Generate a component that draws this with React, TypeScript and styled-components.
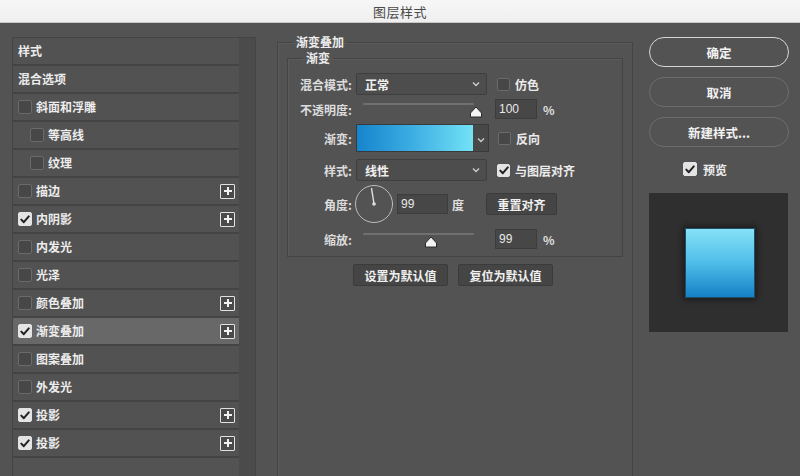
import React from "react";
import styled, { createGlobalStyle } from "styled-components";

const Global = createGlobalStyle`
  html, body { margin: 0; padding: 0; background: #535353; }
  body { font-family: "Noto Sans CJK SC", "Noto Sans", sans-serif; font-size: 12px; color: #e6e6e6; }
  * { box-sizing: border-box; }
`;

const W = 700;

const Window = styled.div`
  width: 800px;
  height: 476px;
  overflow: hidden;
  background: #535353;
  display: flex;
  flex-direction: column;
`;

const TitleBar = styled.div`
  height: 23px;
  flex: 0 0 23px;
  background: linear-gradient(#f7f7f7, #efefef);
  border-bottom: 1px solid #c8c8c8;
  display: flex;
  align-items: center;
  justify-content: center;
  color: #4a4a4a;
  font-size: 13px;
  letter-spacing: 0.5px;
`;

const Body = styled.div`
  flex: 1;
  display: flex;
  align-items: flex-start;
  padding: 12px 0 0 12px;
`;

/* ---------- left list ---------- */
const StyleList = styled.div`
  width: 244px;
  height: 460px;
  margin-top: 2px;
  display: flex;
  border-left: 1px solid #444444;
  border-top: 1px solid #444444;
`;

const Rows = styled.div`
  width: 226px;
  display: flex;
  flex-direction: column;
`;

const Gutter = styled.div`
  flex: 1;
  background: #4b4b4b;
  border-right: 1px solid #454545;
`;

const Row = styled.div<{ $selected?: boolean; $indent?: number }>`
  height: 28px;
  flex: 0 0 28px;
  display: flex;
  align-items: center;
  padding-left: ${(p) => 5 + (p.$indent ?? 0)}px;
  padding-right: 4px;
  gap: 4px;
  background: ${(p) => (p.$selected ? "#686868" : "#525252")};
  border-bottom: 2px solid #444444;
  font-weight: ${W};
  color: #ececec;
  font-size: 12px;
`;

const RowLabel = styled.span`
  flex: 1;
  line-height: 14px;
`;

const PlusBox = styled.span`
  width: 15px;
  height: 15px;
  border: 1.5px solid #e2e2e2;
  border-radius: 1px;
  position: relative;
  background: #4a4a4a;
  &::before, &::after {
    content: "";
    position: absolute;
    background: #f2f2f2;
    left: 50%;
    top: 50%;
  }
  &::before { width: 8px; height: 2px; transform: translate(-50%, -50%); }
  &::after { width: 2px; height: 8px; transform: translate(-50%, -50%); }
`;

const Box = styled.span<{ $checked?: boolean; $size?: number }>`
  width: ${(p) => p.$size ?? 14}px;
  height: ${(p) => p.$size ?? 14}px;
  flex: 0 0 auto;
  border-radius: 2px;
  display: inline-flex;
  align-items: center;
  justify-content: center;
  background: ${(p) => (p.$checked ? "#e4e4e4" : "#474747")};
  border: 1px solid ${(p) => (p.$checked ? "#e4e4e4" : "#6a6a6a")};
`;

const Check = ({ checked, size }: { checked?: boolean; size?: number }) => (
  <Box $checked={checked} $size={size}>
    {checked && (
      <svg width="10" height="9" viewBox="0 0 10 9">
        <path d="M1.3 4.6 L3.8 7.2 L8.8 1.4" fill="none" stroke="#222" strokeWidth="2" strokeLinecap="round" strokeLinejoin="round" />
      </svg>
    )}
  </Box>
);

/* ---------- middle ---------- */
const Group = styled.fieldset`
  margin: 0 0 0 21px;
  padding: 2px 9px 0 9px;
  width: 356px;
  height: 460px;
  min-width: 0;
  border: 1px solid #444444;
  box-shadow: inset 1px 1px 0 #5b5b5b;
`;

const Legend = styled.legend<{ $offset: number }>`
  padding: 0 3px;
  margin-left: ${(p) => p.$offset}px;
  line-height: 14px;
  font-size: 12px;
  color: #ececec;
  font-weight: ${W};
`;

const Inner = styled.fieldset`
  margin: 0;
  padding: 8px 10px 7px 10px;
  width: 336px;
  min-width: 0;
  border: 1px solid #444444;
  box-shadow: inset 1px 1px 0 #5b5b5b;
  display: flex;
  flex-direction: column;
`;

const FormRow = styled.div<{ $h: number; $mt: number }>`
  display: flex;
  align-items: center;
  height: ${(p) => p.$h}px;
  margin-top: ${(p) => p.$mt}px;
`;

const Label = styled.span`
  width: 54px;
  text-align: right;
  margin-right: 4px;
  color: #dcdcdc;
  white-space: nowrap;
  font-weight: ${W};
`;

const Select = styled.div<{ $w: number }>`
  width: ${(p) => p.$w}px;
  height: 22px;
  background: #4d4d4d;
  border: 1px solid #3f3f3f;
  border-radius: 2px;
  display: flex;
  align-items: center;
  padding: 0 6px 0 8px;
  color: #f0f0f0;
  font-weight: ${W};
  justify-content: space-between;
`;

const Chevron = () => (
  <svg width="8" height="6" viewBox="0 0 8 6">
    <path d="M1 1.5 L4 4.5 L7 1.5" fill="none" stroke="#cfcfcf" strokeWidth="1.3" />
  </svg>
);

const CheckLabel = styled.label<{ $ml: number }>`
  display: flex;
  align-items: center;
  gap: 5px;
  margin-left: ${(p) => p.$ml}px;
  color: #ececec;
  font-weight: ${W};
`;

const Slider = styled.div<{ $ml: number }>`
  position: relative;
  width: 111px;
  height: 20px;
  margin-left: ${(p) => p.$ml}px;
  align-self: stretch;
  &::before {
    content: "";
    position: absolute;
    left: 0;
    right: 0;
    top: 4px;
    height: 2px;
    background: #707070;
    border-radius: 1px;
  }
`;

const Thumb = styled.svg`
  position: absolute;
  top: 7px;
`;

const SliderThumb = ({ x }: { x: number }) => (
  <Thumb width="14" height="12" viewBox="0 0 14 12" style={{ left: x - 7 }}>
    <path d="M7 1 L12.5 7 L12.5 11 L1.5 11 L1.5 7 Z" fill="#f4f4f4" stroke="#2a2a2a" strokeWidth="1" strokeLinejoin="round" />
  </Thumb>
);

const NumInput = styled.div<{ $w: number; $ml: number }>`
  width: ${(p) => p.$w}px;
  height: 20px;
  margin-left: ${(p) => p.$ml}px;
  background: #474747;
  border: 1px solid #3c3c3c;
  display: flex;
  align-items: center;
  padding-left: 3px;
  color: #e8e8e8;
  font-family: "Liberation Sans", "Noto Sans", sans-serif;
  font-size: 12px;
`;

const Unit = styled.span<{ $ml: number }>`
  margin-left: ${(p) => p.$ml}px;
  color: #e0e0e0;
  font-weight: ${W};
`;

const Swatch = styled.div`
  display: flex;
  height: 28px;
  border: 1px solid #3a3a3a;
`;

const SwatchColor = styled.div`
  width: 116px;
  background: linear-gradient(90deg, #1584cc 0%, #3fb0e4 50%, #73e2f6 100%);
`;

const SwatchDrop = styled.div`
  width: 15px;
  background: #484848;
  display: flex;
  align-items: center;
  justify-content: center;
  padding-top: 3px;
`;

const Dial = styled.svg`
  flex: 0 0 auto;
  margin-left: -2px;
`;

const FlatButton = styled.div<{ $w: number; $ml?: number }>`
  width: ${(p) => p.$w}px;
  height: 22px;
  margin-left: ${(p) => p.$ml ?? 0}px;
  background: #454545;
  border: 1px solid #3b3b3b;
  border-radius: 2px;
  display: flex;
  align-items: center;
  justify-content: center;
  color: #f0f0f0;
  font-weight: ${W};
`;

const DefaultsRow = styled.div`
  display: flex;
  justify-content: center;
  gap: 10px;
  margin-top: 7px;
  padding-right: 4px;
`;

/* ---------- right ---------- */
const RightCol = styled.div`
  width: 140px;
  margin-left: 16px;
  margin-top: 2px;
  display: flex;
  flex-direction: column;
`;

const Pill = styled.div<{ $primary?: boolean }>`
  height: 30px;
  margin-bottom: 10px;
  border-radius: 15px;
  border: ${(p) => (p.$primary ? "1.5px solid #d6d6d6" : "1.5px solid #6e6e6e")};
  display: flex;
  align-items: center;
  justify-content: center;
  color: #f2f2f2;
  font-weight: ${W};
  font-size: 12.5px;
`;

const PreviewToggle = styled.label`
  display: flex;
  align-items: center;
  gap: 6px;
  padding-left: 34px;
  margin-top: 5px;
  height: 14px;
  color: #ececec;
  font-weight: ${W};
`;

const Preview = styled.div`
  width: 139px;
  height: 139px;
  margin-top: 17px;
  background: #2f2f2f;
  display: flex;
  align-items: center;
  justify-content: center;
`;

const PreviewSquare = styled.div`
  width: 70px;
  height: 70px;
  margin-left: 2px;
  background: linear-gradient(180deg, #86e1f6 0%, #4fbde9 50%, #1580c5 100%);
  border: 1px solid #1d4e6c;
  box-shadow: 0 0 6px 2px rgba(0, 0, 0, 0.45);
`;

type Item = { label: string; check?: boolean; checked?: boolean; plus?: boolean; indent?: number; selected?: boolean };

const items: Item[] = [
  { label: "样式" },
  { label: "混合选项" },
  { label: "斜面和浮雕", check: true },
  { label: "等高线", check: true, indent: 12 },
  { label: "纹理", check: true, indent: 12 },
  { label: "描边", check: true, plus: true },
  { label: "内阴影", check: true, checked: true, plus: true },
  { label: "内发光", check: true },
  { label: "光泽", check: true },
  { label: "颜色叠加", check: true, plus: true },
  { label: "渐变叠加", check: true, checked: true, plus: true, selected: true },
  { label: "图案叠加", check: true },
  { label: "外发光", check: true },
  { label: "投影", check: true, checked: true, plus: true },
  { label: "投影", check: true, checked: true, plus: true },
];

export default function App() {
  const angle = 99;
  const rad = (angle * Math.PI) / 180;
  const cx = 20, cy = 20, len = 16;
  const ex = cx + Math.cos(rad) * len;
  const ey = cy - Math.sin(rad) * len;
  return (
    <Window>
      <Global />
      <TitleBar>图层样式</TitleBar>
      <Body>
        <StyleList>
          <Rows>
            {items.map((it, i) => (
              <Row key={i} $selected={it.selected} $indent={it.indent}>
                {it.check && <Check checked={it.checked} />}
                <RowLabel>{it.label}</RowLabel>
                {it.plus && <PlusBox />}
              </Row>
            ))}
          </Rows>
          <Gutter />
        </StyleList>

        <Group>
          <Legend $offset={6}>渐变叠加</Legend>
          <Inner>
            <Legend $offset={5}>渐变</Legend>
            <FormRow $h={22} $mt={0}>
              <Label>混合模式:</Label>
              <Select $w={131}>
                <span>正常</span>
                <Chevron />
              </Select>
              <CheckLabel $ml={10}>
                <Check size={13} />
                仿色
              </CheckLabel>
            </FormRow>
            <FormRow $h={20} $mt={4}>
              <Label>不透明度:</Label>
              <Slider $ml={7}>
                <SliderThumb x={113} />
              </Slider>
              <NumInput $w={42} $ml={21}>100</NumInput>
              <Unit $ml={6}>%</Unit>
            </FormRow>
            <FormRow $h={28} $mt={5}>
              <Label>渐变:</Label>
              <Swatch>
                <SwatchColor />
                <SwatchDrop>
                  <Chevron />
                </SwatchDrop>
              </Swatch>
              <CheckLabel $ml={9}>
                <Check size={13} />
                反向
              </CheckLabel>
            </FormRow>
            <FormRow $h={22} $mt={7}>
              <Label>样式:</Label>
              <Select $w={131}>
                <span>线性</span>
                <Chevron />
              </Select>
              <CheckLabel $ml={10}>
                <Check size={13} checked />
                与图层对齐
              </CheckLabel>
            </FormRow>
            <FormRow $h={38} $mt={4}>
              <Label>角度:</Label>
              <Dial width="40" height="40" viewBox="0 0 40 40">
                <circle cx={cx} cy={cy} r="18.5" fill="none" stroke="#bdbdbd" strokeWidth="1" />
                <line x1={cx} y1={cy} x2={ex} y2={ey} stroke="#e0e0e0" strokeWidth="1.4" />
                <circle cx={cx} cy={cy} r="1.8" fill="#e0e0e0" />
              </Dial>
              <NumInput $w={51} $ml={3}>99</NumInput>
              <Unit $ml={4}>度</Unit>
              <FlatButton $w={71} $ml={22}>重置对齐</FlatButton>
            </FormRow>
            <FormRow $h={20} $mt={6}>
              <Label>缩放:</Label>
              <Slider $ml={7}>
                <SliderThumb x={68} />
              </Slider>
              <NumInput $w={42} $ml={21}>99</NumInput>
              <Unit $ml={6}>%</Unit>
            </FormRow>
          </Inner>
          <DefaultsRow>
            <FlatButton $w={95}>设置为默认值</FlatButton>
            <FlatButton $w={95}>复位为默认值</FlatButton>
          </DefaultsRow>
        </Group>

        <RightCol>
          <Pill $primary>确定</Pill>
          <Pill>取消</Pill>
          <Pill>新建样式...</Pill>
          <PreviewToggle>
            <Check size={14} checked />
            预览
          </PreviewToggle>
          <Preview>
            <PreviewSquare />
          </Preview>
        </RightCol>
      </Body>
    </Window>
  );
}
